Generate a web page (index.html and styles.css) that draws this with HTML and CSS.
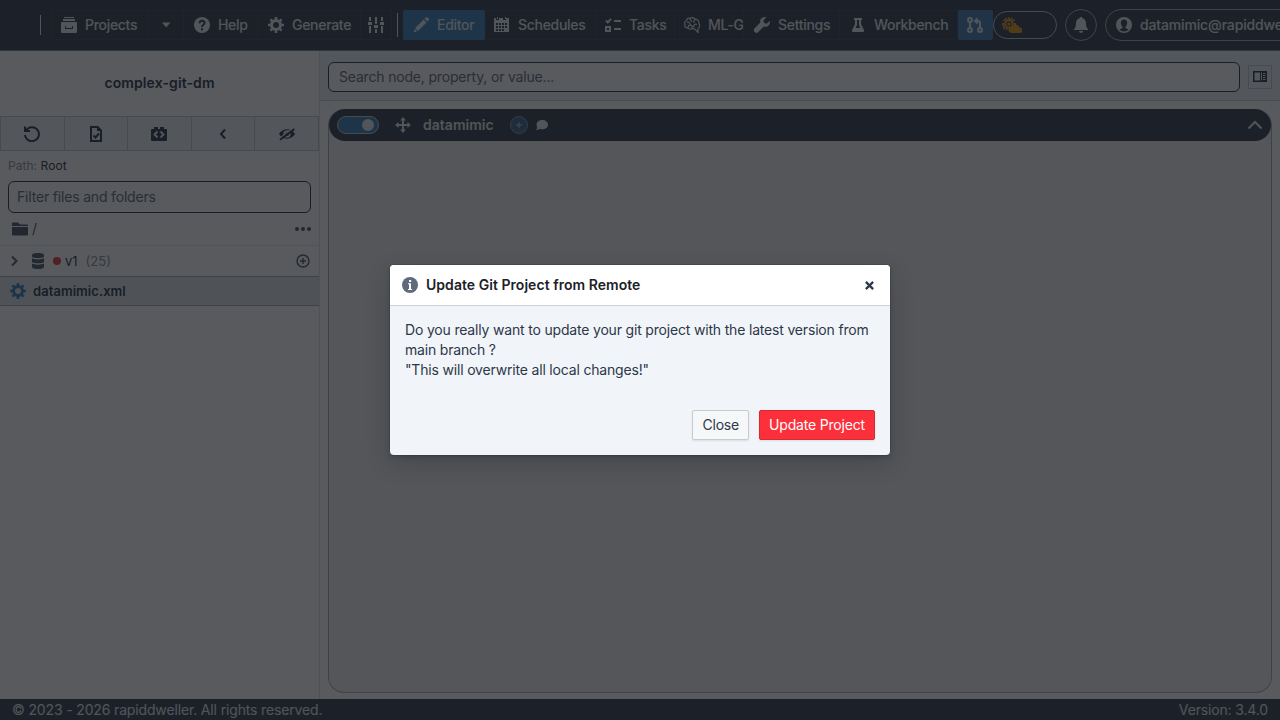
FILE: index.html
```html
<!DOCTYPE html>
<html lang="en">
<head>
  <meta charset="UTF-8">
  <meta name="viewport" content="width=device-width, initial-scale=1.0">
  <title>DATAMIMIC - complex-git-dm</title>
  <link rel="stylesheet" href="styles.css">
</head>
<body>

  <header class="navbar">
    <span class="divider"></span>
    <nav class="nav-group main-nav">
      <button class="nav-btn projects">
        <svg class="icon" viewBox="0 0 16 16"><path d="M3 0h10v1H3zM2 2h12v2H2z"/><path fill-rule="evenodd" d="M1 5h14a1 1 0 0 1 1 1v9a1 1 0 0 1-1 1H1a1 1 0 0 1-1-1V6a1 1 0 0 1 1-1zm3 4v2.500q0 .5.5.5h7q.5 0 .5-.5V9h-1v2H5V9z"/></svg>
        Projects
      </button>
      <button class="nav-btn caret"><svg class="icon" viewBox="0 0 16 16"><path d="M4 5.500h8.400L8.200 10.500z"/></svg></button>
      <button class="nav-btn help">
        <svg class="icon" viewBox="0 0 16 16"><circle cx="8" cy="8" r="8"/><path class="cut-line" d="M5.500 6.300C5.500 2.800 10.700 3 10.500 6c-.1 1.800-2.500 1.700-2.500 4"/><path class="cut" d="M7 11.300h2v2H7z"/></svg>
        Help
      </button>
      <button class="nav-btn generate">
        <svg class="icon" viewBox="0 0 16 16"><use href="#cog"/></svg>
        Generate
      </button>
      <button class="nav-btn sliders"><svg class="icon" viewBox="0 0 16 16"><path d="M1 0h2v4H1zM0 5h4v3H0zM1 9h2v7H1zM7 0h2v7H7zM6 8h4v3H6zM7 12h2v4H7zM13 0h2v4h-2zM12 5h4v3h-4zM13 9h2v7h-2z"/></svg></button>
    </nav>
    <span class="divider second"></span>
    <nav class="nav-group">
      <button class="nav-btn editor active">
        <svg class="icon" viewBox="0 0 16 16"><path d="M2 11.200L10.700 2.500l2.900 2.900L5 14zM11.500 1.700l1.200-1.200a1.300 1.300 0 0 1 1.800 0l1.100 1.100a1.300 1.300 0 0 1 0 1.800l-1.200 1.200zM1.500 12l2.600 2.600L.5 15.500z"/></svg>
        Editor
      </button>
      <button class="nav-btn schedules">
        <svg class="icon" viewBox="0 0 16 16"><path fill-rule="evenodd" d="M1 1h1v2h3V1h4v2h3V1h3v14H0V1zM2 6v2h2V6zm3 0v2h2V6zm3 0v2h2V6zm3 0v2h2V6zM2 9v2h2V9zm3 0v2h2V9zm3 0v2h2V9zm3 0v2h2V9zm-9 3v2h2v-2zm3 0v2h2v-2zm3 0v2h2v-2z"/><path d="M3 0h1v2H3zM11 0h1v2h-1z"/></svg>
        Schedules
      </button>
      <button class="nav-btn tasks">
        <svg class="icon" viewBox="0 0 16 16"><path class="stroke" d="M1 3.500l1.800 2L6 1.800M1 10h4v4H1z"/><path d="M9 3h7v2H9zM9 11h7v2H9z"/></svg>
        Tasks
      </button>
      <button class="nav-btn mlg">
        <svg class="icon" viewBox="0 0 16 16"><path class="thin" d="M6 1.500C4 .5 2.500 2 2.700 3.500.7 4 .2 6 1 7.500c-.8 2 .8 4 3 3.300 1 1.500 3 1.700 4.500.7l2.500.7 3 3.300v-4c2-1 2-3.700 1-5C15 3.500 13 2 11.500 2.500 10 .3 7.500.2 6 1.500zM6 1.500c0 2 1 2 2 3M3 5.500c2-1 3 0 3 2M4 10.500c0-2 2-3 4-2M11.500 2.500c-2 .5-2 2-1 3.500M13 7.500c-2-1-4 1-3 3M8 11.500V8.500"/></svg>
        ML-G
      </button>
      <button class="nav-btn settings">
        <svg class="icon" viewBox="0 0 16 16"><path d="M15.800 3.700l-3 3-2.700-.7-.7-2.800 2.900-3C10 -.3 7 .7 6.300 3.200c-.2.800-.2 1.500 0 2.300L.7 11.200a2.400 2.400 0 0 0 0 3.900 2.400 2.400 0 0 0 3.500 0l5.700-5.600c3.500 1 6.800-2 5.900-5.800z"/></svg>
        Settings
      </button>
      <button class="nav-btn workbench">
        <svg class="icon" viewBox="0 0 16 16"><path fill-rule="evenodd" d="M4 1h8v2h-1v4l3 6.300c.4 1-.2 1.700-1 1.700H3c-.800 0-1.400-.7-1-1.700L5 7V3H4zM7 3v5l-1.400 3h4.800L9 8V3z"/></svg>
        Workbench
      </button>
      <button class="nav-btn git"><svg class="icon" viewBox="0 0 16 16"><path class="stroke" d="M3 5v6M13 11V6q0-2-2-2H8.500M10.500 1.500L8 4l2.500 2.500"/><circle class="stroke" cx="3" cy="3" r="2"/><circle class="stroke" cx="3" cy="13" r="2"/><circle class="stroke" cx="13" cy="13" r="2"/></svg></button>
    </nav>
    <button class="theme-toggle">
      <svg viewBox="0 0 20 16"><path class="sun" d="M7 2.500v-2M11 4l1.400-1.400M3 4L1.600 2.600M2 7H0M3 10.500l-1.400 1.400M12 7h2M4.500 2.800L4 1M9.500 2.800L10 1M2.500 9L1 9.500M5 11.500l-.5 1.500"/><circle class="sun-ring" cx="7" cy="7" r="3.700"/><circle cx="7" cy="7" r="1.600"/><path d="M9 16h8.500a2.800 2.800 0 0 0 .2-5.600 4 4 0 0 0-7.300-.5A3.100 3.100 0 0 0 9 16z"/></svg>
    </button>
    <button class="round-btn"><svg class="icon" viewBox="0 0 16 16"><path d="M8 0a1.500 1.500 0 0 1 1.500 1.300C12 2 13 4 13 6.500c0 3 .7 4.500 2 5.500v1H1v-1c1.300-1 2-2.500 2-5.500C3 4 4 2 6.500 1.300A1.500 1.500 0 0 1 8 0zM6 14h4a2 2 0 0 1-4 0z"/></svg></button>
    <button class="user-btn">
      <svg class="icon" viewBox="0 0 16 16"><circle cx="8" cy="8" r="8"/><path class="cut" d="M8 2.500C5.700 2.500 4.600 4.300 4.900 6.600c.2 1.600.9 2.600 1.700 3.300v1.200L3.300 12.600a6.500 6.500 0 0 0 9.400 0L9.400 11.100V9.900c.8-.7 1.500-1.700 1.700-3.300.3-2.300-.8-4.100-3.100-4.100z"/></svg>
      datamimic@rapiddweller.com
    </button>
  </header>

  <div class="workspace">
    <aside class="sidebar">
      <h1 class="project-name">complex-git-dm</h1>
      <div class="toolbar">
        <button><svg class="icon" viewBox="0 0 16 16"><path class="stroke" d="M1 .5V5h5M1.700 5A7 7 0 1 1 1 9"/></svg></button>
        <button><svg class="icon" viewBox="0 0 16 16"><path class="stroke" d="M3 1h6.500L13 4.500V15H3z"/><path d="M9 1h1l3 3v1H9z"/><path class="stroke" d="M5.500 9.500L7.500 11.500 11 7.500"/></svg></button>
        <button><svg class="icon" viewBox="0 0 16 16"><path d="M1 3h2V1h4v2h2V1h4v2h2a1 1 0 0 1 1 1v10a1 1 0 0 1-1 1H1a1 1 0 0 1-1-1V4a1 1 0 0 1 1-1z"/><path class="code" d="M6.500 5.500L3.500 8.500l3 3M9.500 5.500l3 3-3 3"/></svg></button>
        <button><svg class="icon" viewBox="0 0 16 16"><path class="stroke" d="M10 3.500L6 8l4 4.500"/></svg></button>
        <button><svg class="icon" viewBox="0 0 16 16"><path fill-rule="evenodd" d="M0 8c1.500-2.600 4.500-4.700 8-4.700S14.500 5.400 16 8c-1.500 2.600-4.500 4.700-8 4.700S1.500 10.600 0 8zm4.300 0a3.700 3.700 0 1 0 7.400 0 3.700 3.700 0 0 0-7.400 0z"/><circle cx="8" cy="8" r="2"/><path class="slash" d="M1 12L14.500 1.500"/><path class="stroke" d="M1 13.800L15.500 3"/></svg></button>
      </div>
      <p class="path">Path: <span>Root</span></p>
      <input type="text" class="filter" placeholder="Filter files and folders">
      <div class="root-row">
        <svg class="icon" viewBox="0 0 16 16"><path d="M0 2.500q0-1 1-1h5l2 2h7q1 0 1 1V5H0zM0 6h16v7.500q0 1-1 1H1q-1 0-1-1z"/></svg>
        <span>/</span>
        <svg class="icon more" viewBox="0 0 16 16"><circle cx="2" cy="8" r="2"/><circle cx="8" cy="8" r="2"/><circle cx="14" cy="8" r="2"/></svg>
      </div>
      <div class="folder-row">
        <svg class="icon arrow" viewBox="0 0 16 16"><path class="stroke" d="M6 3.500l4.500 4.500L6 12.500"/></svg>
        <svg class="icon" viewBox="0 0 16 16"><path d="M2 2c0-2.700 12-2.700 12 0v1.500c0 2-12 2-12 0zM2 5.300c2 1.500 10 1.500 12 0v3.400c0 2-12 2-12 0zM2 10.500c2 1.500 10 1.500 12 0V14c0 2.700-12 2.700-12 0z"/></svg>
        <span class="dot"></span>
        <span class="folder-name">v1</span>
        <span class="count">(25)</span>
        <svg class="icon add" viewBox="0 0 16 16"><circle class="line" cx="8" cy="8" r="6"/><path class="line" d="M8 5v6M5 8h6"/></svg>
      </div>
      <div class="file-row">
        <svg class="icon" viewBox="0 0 16 16"><use href="#cog"/></svg>
        datamimic.xml
      </div>
    </aside>

    <main class="content">
      <div class="search-bar">
        <input type="text" placeholder="Search node, property, or value...">
        <button class="panel-btn"><svg viewBox="0 0 14 11"><path fill-rule="evenodd" d="M0 0h14v11H0zM1.500 1.500v8h5.500v-8zM8 1.500v8h1v-8zM10 2v1h2.500V2zm0 2v1h2.500V4zm0 2v1h2.500V6zm0 2v1h2.500V8z"/></svg></button>
      </div>
      <section class="node">
        <div class="node-header">
          <span class="switch"></span>
          <svg class="icon move" viewBox="0 0 16 16"><path d="M8 0l3 3.500H9V7h3.500V5L16 8l-3.500 3V9H9v3.500h2L8 16l-3-3.500h2V9H3.500v2L0 8l3.500-3v2H7V3.500H5z"/></svg>
          <b>datamimic</b>
          <span class="plus"><svg viewBox="0 0 8 8"><path d="M4 1v6M1 4h6"/></svg></span>
          <svg class="comment" viewBox="0 0 12 12"><path d="M6.300 1C9.500 1 12 3 12 5.700s-2.500 4.600-5.700 4.600c-.8 0-1.600-.1-2.300-.4L0 11.200l1.300-2.700C.8 7.700.6 6.700.6 5.700.6 3 3.100 1 6.300 1z"/></svg>
          <svg class="icon collapse" viewBox="0 0 16 16"><path class="stroke" d="M1.500 11.500L8 5l6.500 6.500"/></svg>
        </div>
      </section>
    </main>
  </div>

  <footer class="footer">
    <span>© 2023 - 2026 rapiddweller. All rights reserved.</span>
    <span>Version: 3.4.0</span>
  </footer>

  <div class="backdrop">
    <div class="dialog" role="dialog">
      <div class="dialog-header">
        <svg class="icon" viewBox="0 0 16 16"><circle cx="8" cy="8" r="8"/><path class="info-mark" d="M7 3h2.200v2H7zM6 6.200h3V12h1v1H6v-1h1V7.200H6z"/></svg>
        <h2>Update Git Project from Remote</h2>
        <button class="close-btn"><svg viewBox="0 0 10 10"><path d="M1.700 1.700l6.600 6.600M8.300 1.700L1.700 8.300"/></svg></button>
      </div>
      <div class="dialog-body">
        <p>Do you really want to update your git project with the latest version from main branch ?<br>"This will overwrite all local changes!"</p>
      </div>
      <div class="dialog-footer">
        <button class="btn">Close</button>
        <button class="btn btn-danger">Update Project</button>
      </div>
    </div>
  </div>

  <!-- shared icon -->
  <svg class="sprite">
    <symbol id="cog" viewBox="0 0 16 16">
      <circle cx="8" cy="8" r="4.500" fill="none" stroke="currentColor" stroke-width="3"/>
      <path d="M8 0v3M8 13v3M0 8h3M13 8h3M2.400 2.400l2 2M11.600 11.600l2 2M13.600 2.400l-2 2M4.400 11.600l-2 2" fill="none" stroke="currentColor" stroke-width="2.600"/>
    </symbol>
  </svg>

</body>
</html>
```
FILE: styles.css
```css
* {
  margin: 0;
  padding: 0;
  box-sizing: border-box;
}

body {
  font-family: Inter, sans-serif;
  font-size: 14px;
  line-height: 20px;
  letter-spacing: -0.18px;
  color: #2d3748;
  background-color: #fff;
  display: flex;
  flex-direction: column;
  height: 100vh;
  overflow: hidden;
}

button,
input {
  font: inherit;
  letter-spacing: inherit;
  color: inherit;
}

button {
  flex-shrink: 0;
  background: none;
  border: none;
}

svg {
  fill: currentColor;
  flex-shrink: 0;
}

.icon {
  width: 16px;
  height: 16px;
}

.stroke {
  fill: none;
  stroke: currentColor;
  stroke-width: 2;
}

.sprite {
  display: none;
}

/* top bar */
.navbar {
  height: 51px;
  flex-shrink: 0;
  display: flex;
  align-items: center;
  padding-left: 40px;
  background-color: #374151;
  border-bottom: 1px solid #7b8490;
  color: #e8eaed;
  letter-spacing: -0.3px;
  overflow: hidden;
}

.divider {
  width: 1px;
  height: 20px;
  flex-shrink: 0;
  background-color: #e8eaed;
  margin-right: 10px;
}

.divider.second {
  height: 24px;
  margin: 0 5px;
}

.nav-group {
  display: flex;
  flex-shrink: 0;
}

.nav-btn {
  height: 30px;
  display: flex;
  align-items: center;
  gap: 8px;
  padding-left: 10px;
  border: 1px solid #414b5b;
  border-left-width: 0;
  font-weight: 500;
  white-space: nowrap;
  overflow: hidden;
}

.projects {
  width: 97px;
  border-left-width: 1px;
  padding-left: 9px;
}

.caret {
  width: 36px;
}

.help {
  width: 74px;
}

.generate {
  width: 103px;
}

.sliders {
  width: 31px;
  padding-left: 7px;
}

.main-nav {
  width: 341px;
}

.editor {
  width: 82px;
}

.schedules {
  width: 111px;
  padding-left: 9px;
}

.tasks {
  width: 79px;
  padding-left: 9px;
}

.mlg {
  width: 69px;
  padding-left: 9px;
}

.settings {
  width: 96px;
}

.workbench {
  width: 118px;
}

.git {
  width: 35px;
  padding-left: 9px;
}

.active,
.git {
  background-color: #3c80bd;
  border-color: #3c80bd;
  border-radius: 2px;
}

.git {
  background-color: #467fb4;
}

.cut {
  fill: #374151;
}

.cut-line {
  fill: none;
  stroke: #374151;
  stroke-width: 2;
}

.thin {
  fill: none;
  stroke: currentColor;
  stroke-width: 1.2;
}

.theme-toggle {
  width: 64px;
  height: 28px;
  display: flex;
  align-items: center;
  padding-left: 8px;
  border: 1px solid #c5cbd3;
  border-radius: 14px;
  color: #e69a20;
}

.theme-toggle svg {
  width: 20px;
  height: 16px;
}

.sun,
.sun-ring {
  fill: none;
  stroke: currentColor;
  stroke-width: 2;
}

.round-btn {
  width: 32px;
  height: 32px;
  display: flex;
  align-items: center;
  justify-content: center;
  margin: 0 8px;
  border: 1px solid #aab2bd;
  border-radius: 50%;
}

.user-btn {
  height: 32px;
  display: flex;
  align-items: center;
  gap: 8px;
  padding: 0 10px;
  border: 1px solid #aab2bd;
  border-radius: 16px;
  font-weight: 500;
  letter-spacing: -0.15px;
}

.workspace {
  flex: 1;
  display: flex;
  min-height: 0;
}

/* file tree */
.sidebar {
  width: 320px;
  border-right: 1px solid #dce0e5;
  flex-shrink: 0;
}

.project-name {
  height: 65px;
  font-size: 14px;
  line-height: 64px;
  font-weight: 600;
  letter-spacing: 0.1px;
  text-align: center;
}

.toolbar {
  height: 35px;
  display: flex;
  border: 1px solid #c5cbd3;
  background-color: #edf2f4;
  color: #2f3a4c;
}

.toolbar button {
  flex: 1;
  display: flex;
  align-items: center;
  justify-content: center;
}

.toolbar button + button {
  border-left: 1px solid #c5cbd3;
}

.code {
  fill: none;
  stroke: #edf2f4;
  stroke-width: 1.8;
}

.slash {
  stroke: #edf2f4;
  stroke-width: 1.2;
}

.path {
  padding: 6px 8px 0;
  font-size: 12px;
  line-height: 18px;
  letter-spacing: 0.05px;
  color: #8a929e;
}

.path span {
  color: #2d3748;
}

.filter {
  display: block;
  width: 303px;
  height: 32px;
  margin: 6px 8px 0;
}

.filter,
.search-bar input {
  padding: 0 8px 1px;
  border: 1px solid #2d3748;
  border-radius: 6px;
  background-color: #fff;
}

input::placeholder {
  color: #5f6b7c;
}

.root-row {
  height: 33px;
  display: flex;
  align-items: center;
  gap: 4px;
  padding: 0 8px 0 12px;
  border-bottom: 1px solid #e5e8eb;
  color: #4a5565;
}

.more,
.add {
  margin-left: auto;
}

.folder-row {
  height: 30px;
  display: flex;
  align-items: center;
  padding: 0 8px 0 6px;
  font-size: 13px;
  letter-spacing: 0;
  color: #4f5b6b;
}

.arrow {
  margin-right: 8px;
}

.dot {
  width: 8px;
  height: 8px;
  margin: 0 4px 0 7px;
  border-radius: 50%;
  background-color: #e53e3e;
}

.folder-name {
  color: #2d3748;
}

.count {
  margin-left: 8px;
  color: #8a929e;
}

.line {
  fill: none;
  stroke: currentColor;
  stroke-width: 1.4;
}

.file-row {
  height: 30px;
  display: flex;
  align-items: center;
  gap: 7px;
  padding-left: 10px;
  border-top: 1px solid #a5adb8;
  border-bottom: 1px solid #a5adb8;
  background-color: #dfe7ea;
  font-size: 13px;
  font-weight: 600;
  letter-spacing: 0.05px;
}

.file-row .icon {
  color: #3c80bd;
}

/* editor */
.content {
  flex: 1;
  display: flex;
  flex-direction: column;
  min-width: 0;
}

.search-bar {
  height: 50px;
  display: flex;
  align-items: center;
  gap: 8px;
  padding: 2px 8px 0;
  background-color: #edf2f4;
  border-bottom: 1px solid #cdd4da;
}

.search-bar input {
  width: 912px;
  height: 30px;
  padding: 0 10px;
}

.panel-btn {
  width: 24px;
  height: 24px;
  display: flex;
  align-items: center;
  justify-content: center;
  border: 1px solid #c5cbd3;
}

.panel-btn svg {
  width: 14px;
  height: 11px;
}

.node {
  flex: 1;
  margin: 8px 8px 6px;
  border: 1px solid #a8afb9;
  border-top: none;
  border-radius: 16px;
  background-color: #f0f0f2;
}

.node-header {
  height: 32px;
  display: flex;
  align-items: center;
  padding: 0 8px;
  border-radius: 16px;
  background-color: #374151;
  color: #e8eaed;
}

.switch {
  width: 42px;
  height: 18px;
  display: flex;
  justify-content: flex-end;
  align-items: center;
  padding-right: 4px;
  border: 1px solid #c5cbd3;
  border-radius: 9px;
  background-color: #3c80bd;
}

.switch::after {
  content: "";
  width: 12px;
  height: 12px;
  border-radius: 50%;
  background-color: #e8eaed;
}

.node-header b {
  font-weight: 600;
  letter-spacing: 0.02px;
}

.move {
  margin: 0 12px 0 16px;
}

.plus {
  width: 18px;
  height: 18px;
  display: flex;
  align-items: center;
  justify-content: center;
  margin: 0 8px 0 16px;
  border: 1px solid #8c98a8;
  border-radius: 50%;
  background-color: #3b6a98;
}

.plus svg {
  width: 8px;
  stroke: #b4c8dc;
}

.comment {
  width: 12px;
  height: 12px;
}

.collapse {
  margin-left: auto;
}

.footer {
  height: 21px;
  flex-shrink: 0;
  display: flex;
  justify-content: space-between;
  align-items: center;
  padding: 0 12px;
  background-color: #374151;
  color: #e8eaed;
  letter-spacing: -0.15px;
}

/* confirm dialog */
.backdrop {
  position: absolute;
  inset: 0;
  display: flex;
  align-items: center;
  justify-content: center;
  background-color: rgba(17, 20, 24, 0.7);
}

.dialog {
  width: 500px;
  height: 190px;
  display: flex;
  flex-direction: column;
  border-radius: 4px;
  background-color: #f1f5f9;
  box-shadow: 0 0 0 1px rgba(17, 20, 24, 0.1), 0 2px 4px rgba(17, 20, 24, 0.2), 0 8px 24px rgba(17, 20, 24, 0.2);
  overflow: hidden;
}

.dialog-header {
  height: 41px;
  display: flex;
  align-items: center;
  gap: 8px;
  padding: 0 15px 0 12px;
  background-color: #fff;
  border-bottom: 1px solid #cfd3d9;
}

.dialog-header .icon {
  color: #5f6b7c;
}

.info-mark {
  fill: #fff;
}

.dialog-header h2 {
  flex: 1;
  font-size: 14px;
  font-weight: 600;
  letter-spacing: 0.04px;
  color: #1c2127;
}

.close-btn svg {
  display: block;
  width: 11px;
  stroke: #2d3748;
  stroke-width: 2;
}

.dialog-body {
  flex: 1;
  padding: 14px 15px 0;
}

.dialog-footer {
  display: flex;
  justify-content: flex-end;
  gap: 10px;
  padding: 0 15px 15px;
}

.btn {
  height: 30px;
  padding: 0 9px;
  border: 1px solid #c8ccd1;
  border-radius: 2px;
  background-color: #f6f7f9;
  box-shadow: 0 1px 2px rgba(17, 20, 24, 0.1);
  color: #2d3748;
}

.btn-danger {
  border-color: #d22b35;
  background-color: #fc303a;
  color: #fff;
}
```
